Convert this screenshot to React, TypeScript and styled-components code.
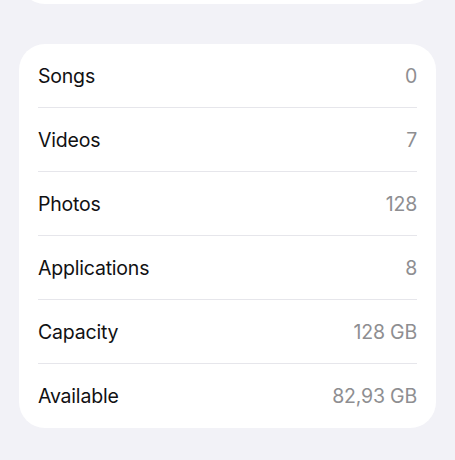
import React from "react";
import styled, { createGlobalStyle } from "styled-components";

const GlobalStyle = createGlobalStyle`
  html, body {
    margin: 0;
    padding: 0;
    background: #f2f2f7;
  }
  body {
    font-family: Inter, "Noto Sans", "Liberation Sans", sans-serif;
    -webkit-font-smoothing: antialiased;
  }
`;

const Page = styled("div")`
  display: flex;
  flex-direction: column;
  gap: 40px;
  padding: 0 19px 40px;
  margin-top: -56px;
  width: 455px;
  box-sizing: border-box;
  background: #f2f2f7;
`;

const Card = styled("div")<{ $height?: number }>`
  flex-shrink: 0;
  background: #ffffff;
  border-radius: 26px;
  padding: 0 19px;
  ${p => (p.$height ? `height: ${p.$height}px;` : "")}
`;

const Row = styled("div")`
  display: flex;
  align-items: center;
  justify-content: space-between;
  height: 64px;
  font-size: 19.5px;
  letter-spacing: -0.2px;
  border-bottom: 1px solid #e6e6eb;
  box-sizing: border-box;

  &:last-child {
    border-bottom: none;
  }
`;

const Label = styled("span")`
  color: #111113;
`;

const Value = styled("span")`
  color: #8e8e91;
`;

const rows: [string, string][] = [
  ["Songs", "0"],
  ["Videos", "7"],
  ["Photos", "128"],
  ["Applications", "8"],
  ["Capacity", "128 GB"],
  ["Available", "82,93 GB"],
];

export default function App() {
  return (
    <>
      <GlobalStyle />
      <Page>
        <Card $height={60} />
        <Card>
          {rows.map(([label, value]) => (
            <Row key={label}>
              <Label>{label}</Label>
              <Value>{value}</Value>
            </Row>
          ))}
        </Card>
      </Page>
    </>
  );
}
